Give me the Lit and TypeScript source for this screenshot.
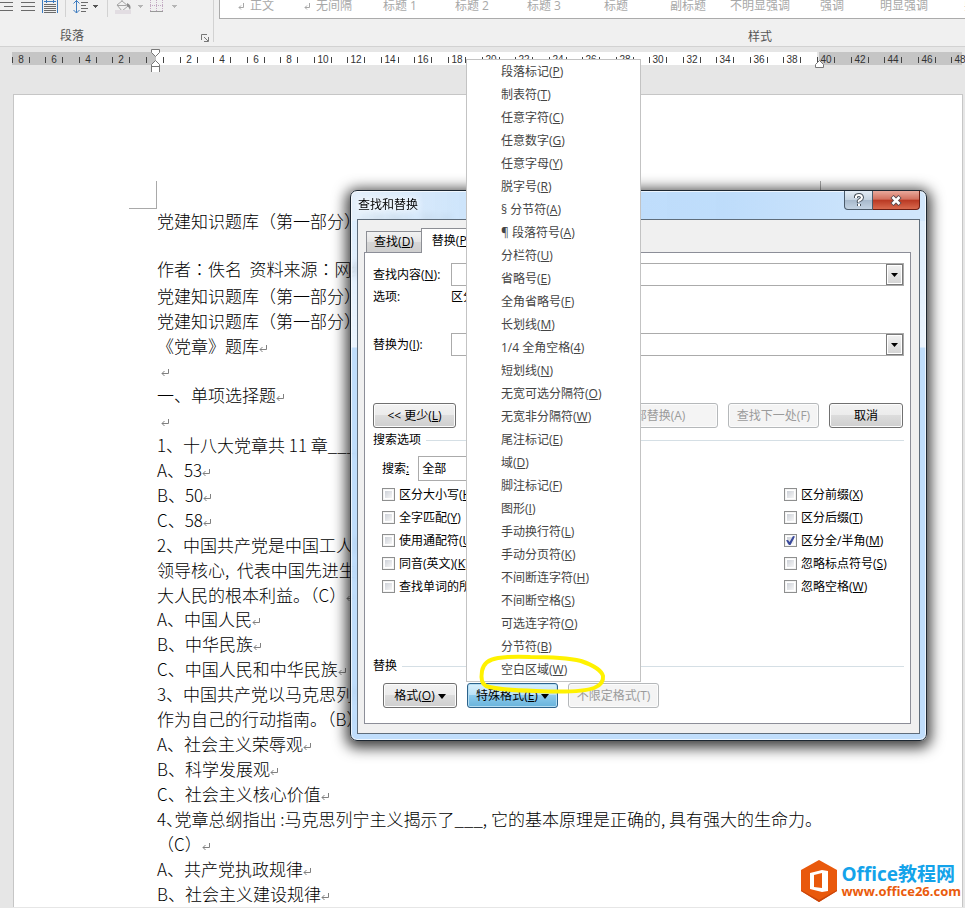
import { LitElement, html, svg, css } from "lit";
import { customElement, property } from "lit/decorators.js";

const UI_FONT = css`"Open Sans", "Noto Sans CJK SC", sans-serif`;

/** Caption with an underlined access key: "查找(D)". */
const key = (text: string, k: string, tail = "") => html`${text}(<u>${k}</u>)${tail}`;

@customElement("word-ribbon")
class WordRibbon extends LitElement {
  static styles = css`
    :host { display: flex; height: 46px; overflow: hidden; background: #f0f0f0; border-bottom: 1px solid #d2d2d2; font: 12px/16px ${UI_FONT}; color: #555; }
    .group { display: flex; flex-direction: column; flex: none; }
    .paragraph { width: 213px; height: 42px; border-right: 1px solid #d2d2d2; }
    .tools { display: block; flex: none; width: 213px; height: 17px; }
    .foot { display: flex; align-items: center; padding: 11px 4px 0 60px; justify-content: space-between; }
    .launch { border: 0; padding: 0; background: none; height: 8px; width: 8px; display: block; margin-top: 4px; }
    .launch svg { display: block; }
    .styles { margin-left: 5px; width: 1082px; }
    .gallery { display: flex; box-sizing: border-box; height: 19px; background: #fff; border: 1px solid #ababab; border-top: 0; }
    .style { width: 72px; height: 12px; line-height: 12px; border: 0; padding: 0; background: none; color: #a8a8a8; font-family: inherit; font-size: 12px; white-space: nowrap; }
    .caption { text-align: center; padding-top: 10px; }
  `;
  private styleNames = ["正文", "无间隔", "标题 1", "标题 2", "标题 3", "标题", "副标题", "不明显强调", "强调", "明显强调", "要点"];
  render() {
    return html`
      <div class="group paragraph">
        <svg class="tools" viewBox="0 0 213 17" shape-rendering="crispEdges" fill="none">
          <path stroke="#6a6a6a" d="M0 2.500h13M4 6.500h9M0 10.500h13M21 2.500h14M21 6.500h14M21 10.500h14M44 4.500h12M44 6.500h12M44 8.500h12M44 10.500h12M44 12.500h12M81 2.500h7M81 5.500h5M81 8.500h7M81 11.500h5" />
          <path stroke="#3e7cc0" d="M42.500 0v13M57.500 0v13M44 1.500h12M46.500 0v3M53.500 0v3M76.500 0v13" />
          <path shape-rendering="auto" stroke="#3e7cc0" d="M73.500 3.500l3-3 3 3M73.500 10l3 3 3-3" />
          <path stroke="#d2d2d2" d="M65.500 0v17M107.500 0v17" />
          <path fill="#555" d="M92 5h6l-3 3z" />
          <path fill="#b5b5b5" d="M137 5h6l-3 3zM171 5h6l-3 3z" />
          <path shape-rendering="auto" stroke="#a5a5a5" d="M117 5l5-4 6 5-6 5zM122 1V-2M117.500 5.500h9" />
          <path shape-rendering="auto" fill="#8c8c8c" d="M127 3q5 2 3 7q-1-3-3-4z" />
          <path fill="#e2dde2" d="M115 10h16v4h-16z" />
          <path stroke="#c2a9c2" stroke-dasharray="1 1" d="M150.500 0v11M156.500 0v11M162.500 0v11M150 5.500h13" />
          <path stroke="#999" d="M150 11.500h13" />
        </svg>
        <div class="foot">
          <span>段落</span>
          <button class="launch" aria-label="段落设置">
            <svg width="8" height="8" fill="none" stroke="#777"><path d="M.5 6V.5H6M3 3l4 4M7.500 3v4.500H3" /></svg>
          </button>
        </div>
      </div>
      <div class="group styles">
        <div class="gallery">
          ${this.styleNames.map((n, i) => html`<button class="style">${i < 2 ? html`<svg width="6" height="7" fill="none" stroke="#a8a8a8"><path d="M5.500 0v4.500H1M3 2.500l-2 2 2 2" /></svg>&nbsp; ` : ""}${n}</button>`)}
        </div>
        <div class="caption">样式</div>
      </div>`;
  }
}

@customElement("word-ruler")
class WordRuler extends LitElement {
  static styles = css`
    :host { display: block; height: 24px; overflow: hidden; }
    .scale { display: block; width: 1400px; height: 24px; }
    .num { font: 10px "Liberation Sans", Arial, sans-serif; fill: #333; text-anchor: middle; }
  `;
  render() {
    const origin = 155;
    const step = 33.55;
    const marks = [];
    for (let i = -4; i <= 24; i++) {
      const x = Math.round(origin + i * step);
      marks.push(svg`
        ${i ? svg`<text class="num" x=${x} y="15">${Math.abs(i) * 2}</text>` : ""}
        <rect x=${x - 9} y="9" width="1" height="6" fill="#444" />
        <rect x=${x + 8} y="9" width="1" height="6" fill="#444" />`);
    }
    return html`<svg class="scale" viewBox="0 0 1400 24">
      <rect x="12" y="4" width="950" height="13" fill="#c5c5c5" />
      <rect x="156" y="4" width="661" height="13" fill="#fff" />
      <rect x="817" y="4" width="2" height="13" fill="#e6e6e6" />
      ${marks}
      <g fill="#fff" stroke="#777">
        <path d="M151.500 1.500h8v3l-4 4-4-4z" />
        <path d="M155.500 12.500l4 4v8h-8v-8z" /><path d="M151.500 18.500h8" />
        <path d="M819.500 12.500l4 4v3h-8v-3z" />
      </g>
    </svg>`;
  }
}

@customElement("word-page")
class WordPage extends LitElement {
  static styles = css`
    :host { display: block; background: #fff; border: 1px solid #c6c6c6; border-bottom: 0; min-height: 813px; box-sizing: border-box; overflow: hidden; }
    .corners { display: flex; justify-content: space-between; height: 27px; padding: 86px 114px 0 115px; }
    .corner { width: 27px; height: 27px; border: 0 solid #a9a9a9; border-bottom-width: 1px; }
    .left { border-right-width: 1px; }
    .right { border-left-width: 1px; }
    .text { padding-left: 143px; font: 300 17px/25px "Noto Sans CJK SC", sans-serif; color: #000; }
    .line { margin: 0; white-space: pre; height: 25px; }
    .short { height: 24px; }
    .first { margin-bottom: 23px; }
    .author { margin-bottom: 2px; }
    .mid { font-family: "Noto Sans CJK TC", sans-serif; }
    .half { font-feature-settings: "halt"; }
  `;
  private mark = html`<svg width="9" height="9" fill="none" stroke="#808080"><path d="M7.500 1v4.500H1M3.500 3l-2.500 2.500 2.500 2.500" /></svg>`;
  private body: [string, boolean, string?][] = [
    ["党建知识题库（第一部分）《党章》题库", false],
    ["党建知识题库（第一部分）《党章》题库", false],
    ["《党章》题库", true, "short"],
    [" ", true],
    ["一、单项选择题", true],
    [" ", true],
    ["1、十八大党章共 11 章____", false],
    ["A、53", true],
    ["B、50", true],
    ["C、58", true],
    ["2、中国共产党是中国工人阶级", false],
    ["领导核心,  代表中国先进生产力", false],
    ["大人民的根本利益。（C）", true, "short"],
    ["A、中国人民", true],
    ["B、中华民族", true],
    ["C、中国人民和中华民族", true],
    ["3、中国共产党以马克思列宁", false],
    ["作为自己的行动指南。（B）", false],
    ["A、社会主义荣辱观", true],
    ["B、科学发展观", true],
    ["C、社会主义核心价值", true],
  ];
  private line(t: string, mark: boolean, cls = "") {
    return html`<p class="line ${cls}">${t}${mark ? this.mark : ""}</p>`;
  }
  render() {
    return html`
      <div class="corners"><div class="corner left"></div><div class="corner right"></div></div>
      <div class="text">
        ${this.line("党建知识题库（第一部分）《党章》题库", false, "first")}
        <p class="line author">作者<span class="mid">：</span>佚名  资料来源<span class="mid">：</span>网络</p>
        ${this.body.map((l) => this.line(...l))}
        <p class="line">4<span class="half">、</span>党章总纲指出 :马克思列宁主义揭示了___, 它的基本原理是正确的, 具有强大的生命力。</p>
        ${this.line("（C）", true)}
        ${this.line("A、共产党执政规律", true)}
        ${this.line("B、社会主义建设规律", true)}
      </div>`;
  }
}

@customElement("replace-dialog")
class ReplaceDialog extends LitElement {
  static styles = css`
    :host {
      display: flex; flex-direction: column; box-sizing: border-box; padding: 0 6px 6px; border: 1px solid #1d2731; border-radius: 7px;
      font: 12px/16px ${UI_FONT}; color: #000;
      background:
        linear-gradient(to right, rgba(232, 241, 249, .6), rgba(185, 218, 251, .8) 32%, rgba(185, 218, 251, .85) 65%, rgba(208, 230, 252, .85)) top / 100% 30px no-repeat,
        linear-gradient(to bottom, rgba(206, 229, 251, .7) 30px, rgba(232, 243, 254, .85) 156px, rgba(185, 218, 251, .9) 157px) 0 0 / 100% 100%;
      backdrop-filter: blur(3px);
      box-shadow: inset 0 0 0 1px rgba(255, 255, 255, .7), 0 3px 14px 4px rgba(0, 0, 0, .75);
    }
    button, input, select { font: inherit; color: inherit; }
    .title { display: flex; height: 28px; padding-left: 1px; }
    .name { margin: 0; padding-top: 6px; font-size: 12px; font-weight: 400; flex: 1; text-shadow: 0 0 6px #fff, 0 0 8px #fff; }
    .win { display: block; height: 19px; box-sizing: border-box; padding: 0; border: 1px solid #4b5b6b; border-top: 0; }
    .win svg { display: block; margin: 0 auto; }
    .help { width: 29px; border-radius: 0 0 0 4px; background: linear-gradient(#e3ecf5, #c5d3e1 48%, #a6b8cb 50%, #c3d3e3); }
    .close { width: 47px; border-radius: 0 0 4px 0; border-left: 0; border-color: #6b1e14; background: linear-gradient(#e9a99c, #d2705e 46%, #b93822 50%, #d8694e); }
    .client { flex: 1; border: 1px solid #5f6d7b; background: #f0f0f0; padding: 8px 8px 9px 6px; display: flex; flex-direction: column; }
    .tabs { display: flex; align-items: flex-end; height: 24px; padding-left: 2px; }
    .tab { height: 21px; width: 56px; padding: 0; box-sizing: border-box; border: 1px solid #8c8e94; border-bottom: 0; background: linear-gradient(#f2f2f2, #e4e4e4 50%, #d6d6d6 50%, #cfcfcf); }
    .on { height: 25px; margin-bottom: -1px; width: 60px; background: #fff; margin-left: -1px; z-index: 1; }
    .panel { flex: 1; display: flex; flex-direction: column; background: #fff; border: 1px solid #8c8e98; padding: 10px 6px 15px 8px; }
    .row { display: grid; grid-template-columns: 78px 1fr; align-items: center; height: 23px; }
    .opts { height: 22px; }
    .gap { margin-top: 25px; }
    .combo { display: flex; height: 23px; box-sizing: border-box; border: 1px solid #ababab; }
    .field { flex: 1; min-width: 0; border: 0; padding: 0 4px; outline: 0; background: #fff; }
    .drop { width: 17px; padding: 0; border: 1px solid #7a7a7a; box-shadow: inset 0 0 0 1px #fff; background: linear-gradient(#f2f2f2, #d4d4d4); }
    .drop svg { display: block; margin: 0 auto; }
    .btn { height: 25px; padding: 0; box-sizing: border-box; border: 1px solid #707070; border-radius: 3px; box-shadow: inset 0 0 0 1px #fcfcfc; background: linear-gradient(#f2f2f2, #ebebeb 50%, #dcdcdc 50%, #cfcfcf); white-space: nowrap; }
    .btn:disabled { border-color: #b5b8ba; background: #f4f4f4; color: #9b9b9b; }
    .hot { border-color: #2c628b; background: linear-gradient(#d9effb, #b9e0f5 50%, #8ccaec 50%, #68b3db); box-shadow: inset 0 0 0 1px #b5def3; }
    .actions { display: flex; gap: 10px; margin-top: 47px; padding-right: 1px; }
    .push { margin-left: auto; }
    .w74 { width: 74px; }
    .w83 { width: 83px; }
    .w91 { width: 91px; }
    .w128 { width: 128px; }
    .legend { display: flex; align-items: center; gap: 5px; height: 24px; margin: 0; font-size: 12px; font-weight: 400; }
    .legend::after { content: ""; flex: 1; height: 1px; background: #d5dfe5; }
    .search { display: flex; align-items: center; gap: 9px; margin: 4px 0 2px 9px; }
    .select { appearance: none; width: 110px; height: 25px; border: 1px solid #ababab; border-radius: 0; background: #fff; padding: 0 3px; }
    .checks { display: grid; grid-template-columns: 402px 1fr; grid-auto-flow: column; grid-template-rows: repeat(5, 23px); padding-left: 9px; }
    .check { display: flex; align-items: center; gap: 4px; white-space: nowrap; }
    .box { appearance: none; position: relative; flex: none; margin: 0; width: 13px; height: 13px; border: 1px solid #8e8f8f; background: linear-gradient(135deg, #cdd1d8, #f6f6f6) content-box; padding: 2px; box-shadow: inset 0 0 0 1px #f4f4f4; }
    .box:checked::after { content: ""; position: absolute; inset: 1px; background: #3a4a9c; clip-path: polygon(0 48%, 22% 44%, 40% 68%, 78% 0, 100% 6%, 50% 100%, 32% 100%); }
    .replace { margin-top: 56px; }
    .bottom { display: flex; gap: 10px; margin: 5px 0 0 10px; }
    .tri { margin-left: 3px; }
  `;
  private checkbox(label: unknown, on = false) {
    return html`<label class="check"><input class="box" type="checkbox" ?checked=${on} /><span>${label}</span></label>`;
  }
  private arrow = html`<svg width="7" height="4"><path d="M0 0h7L3.500 4z" /></svg>`;
  private tri = html`<svg class="tri" width="8" height="6"><path d="M0 0h8L4 5z" /></svg>`;
  render() {
    return html`
      <div class="title">
        <h1 class="name">查找和替换</h1>
        <button class="win help" aria-label="帮助">
          <svg width="12" height="14" fill="none"><path d="M3 5V3.500Q3.500 2 6 2t3 2.500q0 1.500-2 2.500t-1 2.500M6 11v2" stroke="#4a545e" stroke-width="4" /><path d="M3 5V3.500Q3.500 2 6 2t3 2.500q0 1.500-2 2.500t-1 2M6 11v2" stroke="#fff" stroke-width="2" /></svg>
        </button>
        <button class="win close" aria-label="关闭">
          <svg width="12" height="11" fill="none"><path d="M2 1.500l8 8M10 1.500l-8 8" stroke="#5a4a50" stroke-width="4.500" /><path d="M2.500 2l7 7M9.500 2l-7 7" stroke="#fff" stroke-width="2.500" /></svg>
        </button>
      </div>
      <div class="client">
        <div class="tabs" role="tablist">
          <button class="tab" role="tab">${key("查找", "D")}</button>
          <button class="tab on" role="tab" aria-selected="true">${key("替换", "P")}</button>
        </div>
        <div class="panel">
          <div class="row">
            <label for="find">${key("查找内容", "N", ":")}</label>
            <div class="combo"><input class="field" id="find" /><button class="drop" aria-label="查找历史">${this.arrow}</button></div>
          </div>
          <div class="row opts"><span>选项:</span><span>区分全/半角</span></div>
          <div class="row gap">
            <label for="with">${key("替换为", "I", ":")}</label>
            <div class="combo"><input class="field" id="with" /><button class="drop" aria-label="替换历史">${this.arrow}</button></div>
          </div>
          <div class="actions">
            <button class="btn w83">&lt;&lt; ${key("更少", "L")}</button>
            <button class="btn w128 push" disabled>全部替换(A)</button>
            <button class="btn w91" disabled>查找下一处(F)</button>
            <button class="btn w74">取消</button>
          </div>
          <h2 class="legend">搜索选项</h2>
          <div class="search">
            <label for="scope">搜索<u>:</u></label>
            <select class="select" id="scope"><option>全部</option></select>
          </div>
          <div class="checks">
            ${this.checkbox(key("区分大小写", "H"))}
            ${this.checkbox(key("全字匹配", "Y"))}
            ${this.checkbox(key("使用通配符", "U"))}
            ${this.checkbox(key("同音(英文)", "K"))}
            ${this.checkbox("查找单词的所有")}
            ${this.checkbox(key("区分前缀", "X"))}
            ${this.checkbox(key("区分后缀", "T"))}
            ${this.checkbox(key("区分全/半角", "M"), true)}
            ${this.checkbox(key("忽略标点符号", "S"))}
            ${this.checkbox(key("忽略空格", "W"))}
          </div>
          <h2 class="legend replace">替换</h2>
          <div class="bottom">
            <button class="btn w74">${key("格式", "O")}${this.tri}</button>
            <button class="btn w91 hot">${key("特殊格式", "E")}${this.tri}</button>
            <button class="btn w91" disabled>不限定格式(T)</button>
          </div>
        </div>
      </div>`;
  }
}

@customElement("special-menu")
class SpecialMenu extends LitElement {
  @property({ type: Array }) items: [string, string][] = [
    ["段落标记", "P"], ["制表符", "T"], ["任意字符", "C"], ["任意数字", "G"], ["任意字母", "Y"], ["脱字号", "R"],
    ["§ 分节符", "A"], ["¶ 段落符号", "A"], ["分栏符", "U"], ["省略号", "E"], ["全角省略号", "F"], ["长划线", "M"],
    ["1/4 全角空格", "4"], ["短划线", "N"], ["无宽可选分隔符", "O"], ["无宽非分隔符", "W"], ["尾注标记", "E"], ["域", "D"],
    ["脚注标记", "F"], ["图形", "I"], ["手动换行符", "L"], ["手动分页符", "K"], ["不间断连字符", "H"], ["不间断空格", "S"],
    ["可选连字符", "O"], ["分节符", "B"], ["空白区域", "W"],
  ];
  static styles = css`
    :host { display: flex; flex-direction: column; box-sizing: border-box; background: #fff; border: 1px solid #c3c3c3; }
    .item { height: 23px; padding: 0 0 0 34px; border: 0; background: none; text-align: left; font: 12px/23px ${UI_FONT}; color: #444; white-space: nowrap; }
  `;
  render() {
    return this.items.map(([t, k]) => html`<button class="item" role="menuitem">${key(t, k)}</button>`);
  }
}

@customElement("site-logo")
class SiteLogo extends LitElement {
  static styles = css`
    :host { display: flex; align-items: center; gap: 4px; font-family: "Open Sans", "Noto Sans CJK SC", sans-serif; font-weight: 700; white-space: nowrap; }
    .top { font-size: 19px; line-height: 20px; color: #14a3ea; }
    .url { display: block; font-size: 13px; line-height: 14px; color: #ea5b0c; text-decoration: none; }
  `;
  render() {
    return html`
      <svg width="36" height="44" viewBox="0 0 36 44">
        <path fill="#e9590c" d="M18 1l18 10v21L18 43 0 32V11z" />
        <path fill="#c9440a" d="M0 32l18 11 18-11v-1L18 41 0 31z" />
        <path fill="#fff" fill-rule="evenodd" d="M9 14l12-3 6 1v20l-6 1-12-3zM13 16v12l8 1V14z" />
      </svg>
      <div><div class="top">Office教程网</div><a class="url" href="#">www.office26.com</a></div>`;
  }
}

@customElement("app-root")
class AppRoot extends LitElement {
  static styles = css`
    :host { display: block; position: relative; height: 100vh; overflow: hidden; background: #e6e6e6; }
    .page { margin: 0 2px 0 13px; }
    .ruler { margin: 1px 0 22px; }
    .dialog { position: absolute; left: 350px; top: 190px; width: 577px; }
    .menu { position: absolute; left: 466px; top: 59px; width: 175px; }
    .ring { position: absolute; left: 476px; top: 648px; }
    .logo { position: absolute; right: 4px; bottom: 5px; }
  `;
  render() {
    return html`
      <word-ribbon></word-ribbon>
      <word-ruler class="ruler"></word-ruler>
      <word-page class="page"></word-page>
      <replace-dialog class="dialog"></replace-dialog>
      <special-menu class="menu" role="menu"></special-menu>
      <svg class="ring" width="136" height="52" fill="none" stroke="#fff200" stroke-width="4" stroke-linecap="round" stroke-linejoin="round">
        <path d="M54 9Q36 8 22 10Q8 12 6 23Q4 35 10 38Q22 42 60 43Q105 45 118 40Q128 36 127 28Q125 20 105 13Q88 9 54 9" />
      </svg>
      <site-logo class="logo"></site-logo>`;
  }
}
